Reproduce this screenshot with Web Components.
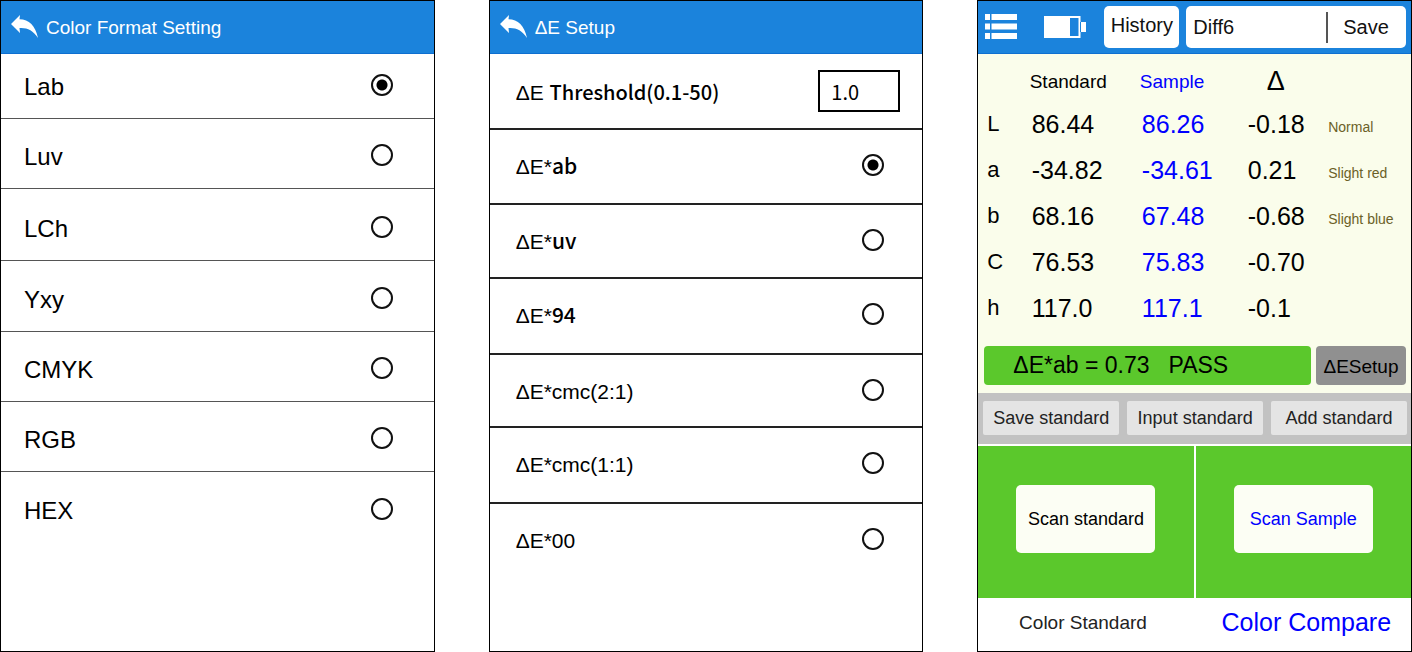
<!DOCTYPE html>
<html lang="en">
<head>
<meta charset="utf-8">
<title>Colorimeter</title>
<style>
  body {
    margin: 0;
    background: #fff;
    color: #000;
    font-family: "Liberation Sans", Arial, sans-serif;
  }
</style>
</head>
<body>
<color-app></color-app>

<template id="phone-screen">
  <style>
    :host {
      display: flex;
      flex-direction: column;
      box-sizing: border-box;
      min-width: 0;
      border: 1px solid #000;
      background: #fff;
    }
    header {
      display: flex;
      align-items: center;
      box-sizing: border-box;
      height: 53px;
      background: #1b83dc;
      border-bottom: 1px solid #0e6fd0;
      color: #fff;
    }
  </style>
  <header><slot name="bar"></slot></header>
  <slot></slot>
</template>

<template id="back-title">
  <style>
    :host {
      display: flex;
      align-items: center;
      gap: 7px;
      padding-left: 10px;
    }
    button {
      display: block;
      padding: 0;
      border: 0;
      background: none;
      color: inherit;
      line-height: 0;
    }
    h1 {
      margin: 0;
      padding-top: 2px;
      font-size: 19px;
      font-weight: 400;
      line-height: 24px;
    }
  </style>
  <button type="button" aria-label="Back">
    <svg width="28" height="24" viewBox="0 0 28 24" fill="currentColor">
      <path d="M0 9 9 0L8.500 4.300C18 4.300 24.500 11 27 23C22 15 16 12.500 8.500 13L9 18Z"/>
    </svg>
  </button>
  <h1><slot></slot></h1>
</template>

<template id="option-row">
  <style>
    :host {
      display: block;
      box-sizing: border-box;
      border-bottom: var(--row-line, 1px solid #555);
    }
    :host(:last-child) {
      border-bottom: 0;
    }
    label {
      display: flex;
      justify-content: space-between;
      align-items: var(--row-align, end);
      box-sizing: border-box;
      height: 100%;
      padding: var(--row-padding);
      font-size: var(--row-size);
      line-height: 28px;
    }
    input {
      appearance: none;
      flex: none;
      box-sizing: border-box;
      width: 22px;
      height: 22px;
      margin: var(--radio-margin);
      border: 2px solid #111;
      border-radius: 50%;
      background: #fff;
    }
    input:checked {
      background: radial-gradient(circle, #000 5px, #fff 6px);
    }
  </style>
  <label><span><slot></slot></span><input type="radio"></label>
</template>

<template id="format-screen">
  <style>
    :host {
      display: block;
    }
    div {
      display: grid;
      grid-template-rows: 65px 70px 72px 71px 70px 70px 70px;
      --row-size: 24px;
      --row-padding: 0 41px 17px 23px;
      --radio-margin: 0 0 5px;
    }
  </style>
  <div role="radiogroup" aria-label="Color format"></div>
</template>

<template id="delta-screen">
  <style>
    :host {
      display: block;
    }
    .list {
      display: grid;
      grid-template-rows: 76px 75px 74px 76px 73px 76px 76px;
      --row-line: 2px solid #222;
      --row-align: start;
      --row-size: 21px;
      --row-padding: 23px 38px 0 26px;
      --radio-margin: 1px 0 0;
    }
    .threshold {
      display: flex;
      justify-content: space-between;
      align-items: start;
      box-sizing: border-box;
      padding: 16px 22px 0 26px;
      border-bottom: var(--row-line);
      font-size: 21px;
      line-height: 28px;
    }
    .threshold label {
      padding-top: 9px;
    }
    .cjk {
      font-family: "Noto Sans CJK SC", sans-serif;
      font-weight: 500;
      line-height: 24px;
    }
    .threshold .cjk {
      font-size: 20px;
    }
    input {
      box-sizing: border-box;
      width: 82px;
      height: 42px;
      padding: 0 11px;
      border: 2px solid #000;
      border-radius: 0;
      background: #fff;
      color: #000;
      font: 20px "Noto Sans CJK SC", sans-serif;
    }
  </style>
  <div class="list" role="radiogroup" aria-label="Formula">
    <div class="threshold">
      <label for="limit">ΔE <span class="cjk">Threshold(0.1-50)</span></label>
      <input id="limit" type="text" value="1.0">
    </div>
    <option-row checked>ΔE*<span class="cjk">ab</span></option-row>
    <option-row>ΔE*<span class="cjk">uv</span></option-row>
    <option-row>ΔE*<span class="cjk">94</span></option-row>
    <option-row>ΔE*cmc(2:1)</option-row>
    <option-row>ΔE*cmc(1:1)</option-row>
    <option-row>ΔE*00</option-row>
  </div>
</template>

<template id="compare-bar">
  <style>
    :host {
      display: flex;
      flex: 1;
      align-items: center;
      min-width: 0;
      padding: 0 5px 0 7px;
    }
    button, input {
      box-sizing: border-box;
      margin: 0;
      border: 0;
      background: #fff;
      color: #111;
      font: 20px "Liberation Sans", Arial, sans-serif;
    }
    .menu {
      padding: 0;
      background: none;
      color: #fff;
      line-height: 0;
    }
    .battery {
      flex: none;
      margin: 0 18px 0 27px;
    }
    .history {
      flex: none;
      width: 75px;
      height: 42px;
      padding: 0 0 4px;
      border-radius: 5px;
    }
    .record {
      display: flex;
      flex: 1;
      align-items: center;
      min-width: 0;
      height: 42px;
      margin-left: 7px;
      border-radius: 5px;
      background: #fff;
    }
    .record input {
      flex: 1;
      min-width: 0;
      height: 31px;
      padding: 0 7px;
      border-right: 2px solid #555;
      background: none;
    }
    .record button {
      width: 78px;
      height: 40px;
      padding: 0 2px 0 0;
      background: none;
    }
  </style>
  <button class="menu" type="button" aria-label="Menu">
    <svg width="32" height="26" viewBox="0 0 32 26" fill="currentColor">
      <path d="M0 0h5v6H0zM6.500 0H32v6H6.500zM0 9.500h5v6H0zM6.500 9.500H32v6H6.500zM0 19h5v6H0zM6.500 19H32v6H6.500z"/>
    </svg>
  </button>
  <svg class="battery" width="42" height="22" viewBox="0 0 42 22" role="img" aria-label="Battery">
    <path d="M0 0h36.500v6H42v10h-5.500v6H0z" fill="#fff"/>
    <path d="M26 2h8.500v18H26z" fill="#1b83dc"/>
    <path d="M36.500 6v10" stroke="#1b83dc"/>
  </svg>
  <button class="history" type="button">History</button>
  <div class="record">
    <input type="text" value="Diff6" aria-label="Record name">
    <button type="button">Save</button>
  </div>
</template>

<template id="compare-table">
  <style>
    :host {
      display: block;
      padding: 8px 0 15px 9px;
    }
    table {
      width: 100%;
      border-collapse: collapse;
      table-layout: fixed;
    }
    th, td {
      padding: 0;
      font-weight: 400;
      text-align: left;
      white-space: nowrap;
    }
    thead th {
      height: 39px;
      font-size: 19px;
    }
    thead th.delta {
      padding-left: 21px;
      font-size: 27px;
    }
    tbody tr {
      height: 46px;
    }
    tbody th {
      font-size: 22px;
    }
    tbody td {
      padding-left: 2px;
      font-size: 25px;
    }
    .sample {
      color: #00f;
    }
    tbody .note {
      padding-top: 6px;
      color: #6b6127;
      font-size: 14px;
    }
  </style>
  <table>
    <colgroup>
      <col style="width: 10%"><col style="width: 26%"><col style="width: 25%"><col style="width: 19%"><col>
    </colgroup>
    <thead>
      <tr><th></th><th>Standard</th><th class="sample">Sample</th><th class="delta">Δ</th><th></th></tr>
    </thead>
    <tbody></tbody>
  </table>
</template>

<template id="compare-screen">
  <style>
    :host {
      display: flex;
      flex: 1;
      flex-direction: column;
      background: #fff;
    }
    button {
      display: block;
      margin: 0;
      padding: 0;
      border: 0;
      color: #000;
      font: 18px "Liberation Sans", Arial, sans-serif;
    }
    .reading {
      padding-bottom: 8px;
      background: #fafdeb;
    }
    .result {
      display: flex;
      gap: 5px;
      padding: 0 5px 0 6px;
    }
    .result output {
      flex: 1;
      padding-left: 29px;
      border-radius: 4px;
      background: #5bc82c;
      font-size: 23px;
      line-height: 39px;
      white-space: pre;
    }
    .result span {
      padding-left: 19px;
    }
    .result button {
      width: 90px;
      padding-top: 2px;
      border-radius: 4px;
      background: #909090;
      font-size: 19px;
    }
    .actions {
      display: grid;
      grid-template-columns: repeat(3, 1fr);
      gap: 8px;
      padding: 8px 4px 9px 5px;
      background: #c2c2c2;
    }
    .actions button {
      height: 34px;
      border-radius: 2px;
      background: #e4e4e4;
      color: #222;
    }
    .scan {
      display: grid;
      flex: 1;
      grid-template-columns: 1fr 1fr;
      gap: 2px;
      margin-top: 2px;
    }
    .scan div {
      display: flex;
      align-items: center;
      justify-content: center;
      background: #5bc82c;
    }
    .scan button {
      width: 139px;
      height: 68px;
      margin-bottom: 6px;
      border-radius: 5px;
      background: #fcfef4;
    }
    nav {
      display: grid;
      grid-template-columns: 1fr 1fr;
      gap: 14px;
      height: 53px;
    }
    nav a {
      display: flex;
      align-items: center;
      justify-content: center;
      padding-bottom: 4px;
      color: #222;
      font-size: 19px;
      text-decoration: none;
      white-space: nowrap;
    }
    nav a.current {
      font-size: 25px;
    }
    .scan .sample, nav a.current {
      color: #00f;
    }
  </style>
  <div class="reading">
    <compare-table></compare-table>
    <div class="result">
      <output>ΔE*ab = 0.73<span>PASS</span></output>
      <button type="button">ΔESetup</button>
    </div>
  </div>
  <div class="actions">
    <button type="button">Save standard</button>
    <button type="button">Input standard</button>
    <button type="button">Add standard</button>
  </div>
  <div class="scan">
    <div><button type="button">Scan standard</button></div>
    <div><button type="button" class="sample">Scan Sample</button></div>
  </div>
  <nav>
    <a href="#standard">Color Standard</a>
    <a href="#compare" class="current">Color Compare</a>
  </nav>
</template>

<template id="color-app">
  <style>
    :host {
      display: grid;
      grid-template-columns: repeat(3, minmax(0, 1fr));
      gap: 54px;
      min-height: 100vh;
    }
  </style>
  <phone-screen>
    <back-title slot="bar">Color Format Setting</back-title>
    <format-screen></format-screen>
  </phone-screen>
  <phone-screen>
    <back-title slot="bar">ΔE Setup</back-title>
    <delta-screen></delta-screen>
  </phone-screen>
  <phone-screen>
    <compare-bar slot="bar"></compare-bar>
    <compare-screen></compare-screen>
  </phone-screen>
</template>

<script>
  const FORMATS = ["Lab", "Luv", "LCh", "Yxy", "CMYK", "RGB", "HEX"];

  const READINGS = [
    ["L", "86.44", "86.26", "-0.18", "Normal"],
    ["a", "-34.82", "-34.61", "0.21", "Slight red"],
    ["b", "68.16", "67.48", "-0.68", "Slight blue"],
    ["C", "76.53", "75.83", "-0.70", ""],
    ["h", "117.0", "117.1", "-0.1", ""],
  ];

  // every element clones the template that carries its own tag name
  class AppElement extends HTMLElement {
    constructor() {
      super();
      const _template = document.getElementById(this.localName);
      this.attachShadow({ mode: "open" });
      this.shadowRoot.appendChild(_template.content.cloneNode(true));
    }
  }

  class OptionRow extends AppElement {
    connectedCallback() {
      const _input = this.shadowRoot.querySelector("input");
      _input.checked = this.hasAttribute("checked");

      // radios in separate shadow roots do not group, so clear the siblings here
      _input.addEventListener("change", () => {
        this.parentNode.querySelectorAll("option-row").forEach((row) => {
          row.shadowRoot.querySelector("input").checked = row === this;
        });
      });
    }
  }

  class FormatScreen extends AppElement {
    connectedCallback() {
      const _list = this.shadowRoot.querySelector("div");
      _list.innerHTML = FORMATS.map(
        (name, i) => `<option-row${i === 0 ? " checked" : ""}>${name}</option-row>`,
      ).join("");
    }
  }

  class CompareTable extends AppElement {
    connectedCallback() {
      this.shadowRoot.querySelector("tbody").innerHTML = READINGS.map(
        ([axis, standard, sample, delta, note]) => `
          <tr>
            <th scope="row">${axis}</th>
            <td>${standard}</td>
            <td class="sample">${sample}</td>
            <td>${delta}</td>
            <td class="note">${note}</td>
          </tr>`,
      ).join("");
    }
  }

  customElements.define("option-row", OptionRow);
  customElements.define("back-title", class extends AppElement {});
  customElements.define("format-screen", FormatScreen);
  customElements.define("delta-screen", class extends AppElement {});
  customElements.define("compare-bar", class extends AppElement {});
  customElements.define("compare-table", CompareTable);
  customElements.define("compare-screen", class extends AppElement {});
  customElements.define("phone-screen", class extends AppElement {});
  customElements.define("color-app", class extends AppElement {});
</script>
</body>
</html>
